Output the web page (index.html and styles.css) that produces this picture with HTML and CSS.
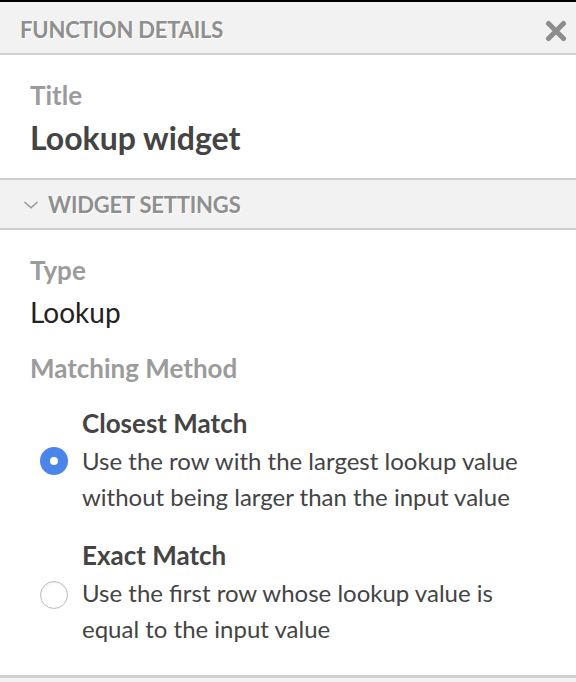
FILE: index.html
```html
<!DOCTYPE html>
<html>
<head>
<meta charset="utf-8">
<link rel="stylesheet" href="styles.css">
</head>
<body>
<div class="panel">
  <div class="panel-header">
    <span class="panel-title">FUNCTION DETAILS</span>
    <svg class="close" width="22" height="22" viewBox="0 0 22 22"><path d="M3.5 3.5 L18.5 18.5 M18.5 3.5 L3.5 18.5" stroke="#8d8d8d" stroke-width="5" stroke-linecap="round"/></svg>
  </div>
  <div class="section title-section">
    <div class="label">Title</div>
    <div class="title-value">Lookup widget</div>
  </div>
  <div class="sub-header">
    <svg class="chev" width="16" height="8" viewBox="0 0 16 8"><path d="M1.5 1 L8 6.8 L14.5 1" fill="none" stroke="#9a9a9a" stroke-width="1.6"/></svg>
    <span class="panel-title">WIDGET SETTINGS</span>
  </div>
  <div class="section settings">
    <div class="label">Type</div>
    <div class="type-value">Lookup</div>
    <div class="label method">Matching Method</div>
    <div class="option">
      <div class="opt-title">Closest Match</div>
      <div class="opt-row">
        <span class="radio checked"></span>
        <div class="opt-desc">Use the row with the largest lookup value without being larger than the input value</div>
      </div>
    </div>
    <div class="option">
      <div class="opt-title">Exact Match</div>
      <div class="opt-row">
        <span class="radio"></span>
        <div class="opt-desc">Use the first row whose lookup value is equal to the input value</div>
      </div>
    </div>
  </div>
  <div class="footer"></div>
</div>
</body>
</html>
```

FILE: styles.css
```css
html, body {
  margin: 0;
  padding: 0;
  background: #fff;
}
body {
  font-family: Lato, "Open Sans", sans-serif;
  width: 576px;
  height: 682px;
  overflow: hidden;
}
.panel {
  border-top: 2px solid #000;
}
.panel-header {
  height: 51px;
  background: #f2f2f2;
  border-bottom: 2px solid #cfcfcf;
  display: flex;
  align-items: center;
  justify-content: space-between;
  padding: 0 9px 0 20px;
}
.panel-header .panel-title {
  margin-top: 3px;
}
.panel-title {
  font-weight: 700;
  font-size: 22px;
  color: #8f8f8f;
  text-shadow: 1px 1px 0 #fff;
  letter-spacing: -0.2px;
}
.close {
  margin-top: 7px;
}
.section {
  padding: 0 30px;
}
.label {
  font-weight: 700;
  font-size: 26px;
  color: #9b9b9b;
  line-height: 30px;
}
.title-section {
  padding-top: 25px;
  padding-bottom: 20px;
}
.title-value {
  font-weight: 700;
  font-size: 32px;
  color: #444;
  line-height: 40px;
  margin-top: 8px;
}
.sub-header {
  height: 48px;
  background: #f2f2f2;
  border-top: 2px solid #cfcfcf;
  border-bottom: 2px solid #cfcfcf;
  display: flex;
  align-items: center;
  padding-left: 23px;
  gap: 9px;
}
.chev {
  margin-top: 1px;
}
.settings {
  padding-top: 25px;
  padding-bottom: 28px;
}
.type-value {
  font-size: 28px;
  color: #222;
  line-height: 34px;
  margin-top: 10px;
}
.label.method {
  margin-top: 24px;
}
.option {
  margin-top: 25px;
}
.option + .option {
  margin-top: 25px;
}
.opt-title {
  font-weight: 700;
  font-size: 26px;
  color: #444;
  padding-left: 52px;
  line-height: 30px;
}
.opt-row {
  display: flex;
  align-items: flex-start;
  margin-top: 5px;
}
.radio {
  flex: none;
  width: 28px;
  height: 28px;
  box-sizing: border-box;
  border-radius: 50%;
  border: 1px solid #bdbdbd;
  background: #fff;
  margin: 6px 14px 0 10px;
  box-shadow: inset 0 1px 2px rgba(0,0,0,0.08);
}
.radio.checked {
  border: 10px solid #4a86ea;
  box-shadow: none;
  margin-top: 4px;
}
.opt-desc {
  font-size: 24px;
  color: #444;
  line-height: 36px;
}
.footer {
  border-top: 3px solid #cfcfcf;
  background: #f2f2f2;
  height: 20px;
}
```
